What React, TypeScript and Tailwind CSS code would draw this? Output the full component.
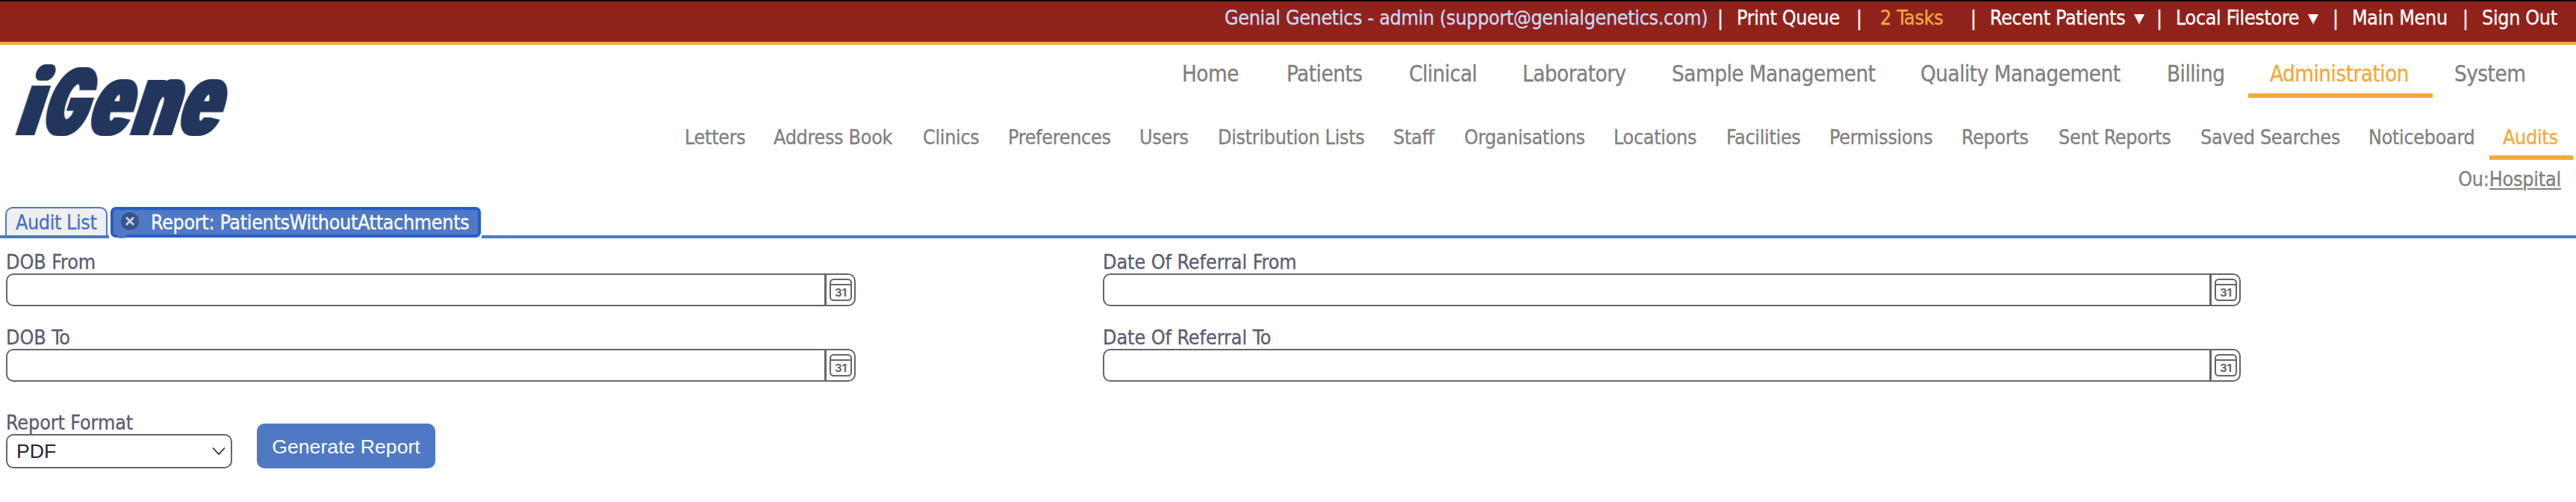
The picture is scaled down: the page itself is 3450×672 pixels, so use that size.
import clsx from "clsx";

const topLinks = [
  { label: "Genial Genetics - admin (support@genialgenetics.com)", width: "w-[660px]", color: "text-[#c9d9fb]" },
  { label: "Print Queue", width: "w-[160px]" },
  { label: "2 Tasks", width: "w-[121px]", color: "text-[#f2a93b]" },
  { label: "Recent Patients", width: "w-[223px]", menu: true },
  { label: "Local Filestore", width: "w-[210px]", menu: true },
  { label: "Main Menu", width: "w-[148px]" },
  { label: "Sign Out", width: "w-[126px]" },
];

const mainNav = [
  { label: "Home", width: "w-[140px]" },
  { label: "Patients", width: "w-[164px]" },
  { label: "Clinical", width: "w-[152px]" },
  { label: "Laboratory", width: "w-[200px]" },
  { label: "Sample Management", width: "w-[333px]" },
  { label: "Quality Management", width: "w-[330px]" },
  { label: "Billing", width: "w-[138px]" },
  { label: "Administration", width: "w-[247px]", active: true },
  { label: "System", width: "w-[153px]" },
];

const subNav = [
  { label: "Letters", width: "w-[119px]" },
  { label: "Address Book", width: "w-[200px]" },
  { label: "Clinics", width: "w-[114px]" },
  { label: "Preferences", width: "w-[176px]" },
  { label: "Users", width: "w-[105px]" },
  { label: "Distribution Lists", width: "w-[235px]" },
  { label: "Staff", width: "w-[95px]" },
  { label: "Organisations", width: "w-[200px]" },
  { label: "Locations", width: "w-[151px]" },
  { label: "Facilities", width: "w-[138px]" },
  { label: "Permissions", width: "w-[177px]" },
  { label: "Reports", width: "w-[130px]" },
  { label: "Sent Reports", width: "w-[190px]" },
  { label: "Saved Searches", width: "w-[225px]" },
  { label: "Noticeboard", width: "w-[180px]" },
  { label: "Audits", width: "w-[112px]", active: true },
];

function CaretDown() {
  return (
    <svg className="mt-1 ml-[12px] h-[14px] w-[14px]" viewBox="0 0 14 14">
      <defs>
        <linearGradient id="caret" x1="0" y1="0" x2="0" y2="1">
          <stop offset="0" stopColor="#fff" />
          <stop offset="0.5" stopColor="#fff" />
          <stop offset="1" stopColor="#d9a9a6" />
        </linearGradient>
      </defs>
      <path d="M0 0H14L7 14Z" fill="url(#caret)" />
    </svg>
  );
}

function CalendarIcon() {
  return (
    <svg className="h-[30px] w-[30px]" viewBox="0 0 30 30" fill="none" stroke="#666" strokeWidth="2">
      <rect x="1" y="1" width="28" height="28" rx="4.5" />
      <path d="M1 8H29" />
      <text x="15" y="24" textAnchor="middle" stroke="none" fill="#666" className="font-['Inter'] text-[15px] font-bold">
        31
      </text>
    </svg>
  );
}

function Logo() {
  return (
    <svg className="h-[180px] w-[340px] overflow-visible" viewBox="0 0 340 180" aria-label="iGene">
      <defs>
        {/* widens the stems only, so the letters get their condensed poster weight */}
        <filter id="heavy" x="-20%" y="-20%" width="140%" height="140%">
          <feMorphology operator="dilate" radius="4 0" />
        </filter>
      </defs>
      <g transform="translate(0 121) skewX(-18.4)" fill="#20355b" className="font-['Inter'] font-black">
        <g filter="url(#heavy)">
          <text transform="translate(20 0) scale(0.74 1)" fontSize="122">i</text>
          <text transform="translate(53 0) scale(0.59 1)" fontSize="124">G</text>
          <text transform="translate(115 0) scale(0.63 1)" fontSize="136">e</text>
          <text transform="translate(173 0) scale(0.65 1)" fontSize="136">n</text>
          <text transform="translate(235 0) scale(0.63 1)" fontSize="136">e</text>
        </g>
      </g>
    </svg>
  );
}

function DateField({ label, width }: { label: string; width: string }) {
  return (
    <div>
      <label className="block h-[31px] leading-8 tracking-[-0.05px] text-[#5a5b75]">{label}</label>
      <div className={clsx("flex h-11 rounded-[10px] border-2 border-[#666] bg-white", width)}>
        <input className="min-w-0 flex-1 outline-none" />
        <button className="flex w-10 items-center justify-center border-l-[3px] border-[#666]">
          <CalendarIcon />
        </button>
      </div>
    </div>
  );
}

export default function App() {
  return (
    <div className="h-[672px] w-[3450px] overflow-hidden bg-white font-['DejaVu_Sans_Condensed','DejaVu_Sans',sans-serif] text-[26.67px] whitespace-nowrap [-webkit-text-stroke:0.3px]">
      <header className="flex h-[60px] justify-end border-t-2 border-b-4 border-t-black border-b-[#f2a93b] bg-[#8f231c] pt-[6px] leading-8 tracking-[-0.33px] text-white">
        {topLinks.map((link, i) => (
          <div key={link.label} className="flex">
            {i > 0 && <span className={clsx(i === 2 ? "w-8" : "w-[26px]")}>|</span>}
            <a className={clsx("flex h-8 items-center", link.width, link.color)}>
              {link.label}
              {link.menu && <CaretDown />}
            </a>
          </div>
        ))}
      </header>

      <div className="flex h-[217px] justify-between">
        <Logo />
        <div className="flex flex-col items-end text-[#808080]">
          <nav className="mt-[19px] mr-[39px] flex text-[29.33px] leading-10 tracking-[-0.5px]">
            {mainNav.map((item) => (
              <a
                key={item.label}
                className={clsx(
                  "h-[52px] pl-[29px]",
                  item.width,
                  item.active && "border-b-[6px] border-[#f2a93b] text-[#f2a93b]"
                )}
              >
                {item.label}
              </a>
            ))}
          </nav>
          <nav className="mt-[37px] mr-1 flex leading-8 tracking-[-0.3px]">
            {subNav.map((item) => (
              <a
                key={item.label}
                className={clsx(
                  "h-[46px] pl-[18px]",
                  item.width,
                  item.active && "border-b-[6px] border-[#f2a93b] text-[#f2a93b]"
                )}
              >
                {item.label}
              </a>
            ))}
          </nav>
          <div className="mt-[10px] mr-5 leading-8 tracking-[-0.2px]">
            Ou:<a className="underline decoration-2 underline-offset-[3px]">Hospital</a>
          </div>
        </div>
      </div>

      <div className="flex h-[42px] leading-8">
        <div className="w-[7px] border-b-4 border-[#4d78c5]" />
        <div className="border-b-4 border-[#4d78c5]">
          <a className="flex h-[38px] w-[137px] rounded-t-[10px] border-2 border-b-0 border-[#4d78c5] bg-[#efefef] pt-[3px] pl-3 tracking-[-0.4px] text-[#4472c8]">
            Audit List
          </a>
        </div>
        <div className="w-[2px] border-b-4 border-[#4d78c5]" />
        <div className="w-[499px] pl-[2px]">
          <a className="flex h-[41px] w-[496px] rounded-[7px] border-4 border-[#285dc7] bg-[#4f79c4] text-white">
            <svg className="mt-[2px] ml-[9px] h-[26px] w-[26px]" viewBox="0 0 26 26">
              <circle cx="13" cy="13" r="12" fill="#36558b" />
              <path d="M8 8L18 18M18 8L8 18" stroke="#c5cfe0" strokeWidth="3" />
            </svg>
            <span className="ml-[15px] pt-px tracking-[-0.33px]">Report: PatientsWithoutAttachments</span>
          </a>
          {/* pointer that joins the open tab to the rule below it */}
          <svg className="relative -top-[5px] left-[6px] h-[6px] w-[20px]" viewBox="0 0 20 6">
            <path d="M0 0H20Q14 1 13 6H5Q4 1 0 0Z" fill="#4f79c4" />
          </svg>
        </div>
        <div className="flex-1 border-b-4 border-[#4d78c5]" />
      </div>

      <form className="pt-4 pl-2">
        <div className="grid grid-cols-[1469px_1fr] gap-y-[26px]">
          <DateField label="DOB From" width="w-[1138px]" />
          <DateField label="Date Of Referral From" width="w-[1524px]" />
          <DateField label="DOB To" width="w-[1138px]" />
          <DateField label="Date Of Referral To" width="w-[1524px]" />
        </div>
        <div className="mt-[39px] flex items-end gap-[33px] [-webkit-text-stroke:0]">
          <div>
            <label className="block h-[31px] leading-8 tracking-[-0.1px] text-[#5a5b75] [-webkit-text-stroke:0.3px]">
              Report Format
            </label>
            <div className="flex h-[46px] w-[303px] items-center justify-between rounded-[10px] border-2 border-[#666] pr-[7px] pl-[12px] font-['Liberation_Sans',sans-serif] text-[#25253a]">
              PDF
              <svg className="h-[12px] w-[18px]" viewBox="0 0 18 12" fill="none" stroke="#25253a" strokeWidth="1.7">
                <path d="M1 1.5L9 10L17 1.5" />
              </svg>
            </div>
          </div>
          <button
            type="button"
            className="h-[60px] w-[239px] rounded-[10px] bg-[#4f79c4] pt-[2px] font-['Liberation_Sans',sans-serif] text-white"
          >
            Generate Report
          </button>
        </div>
      </form>
    </div>
  );
}
